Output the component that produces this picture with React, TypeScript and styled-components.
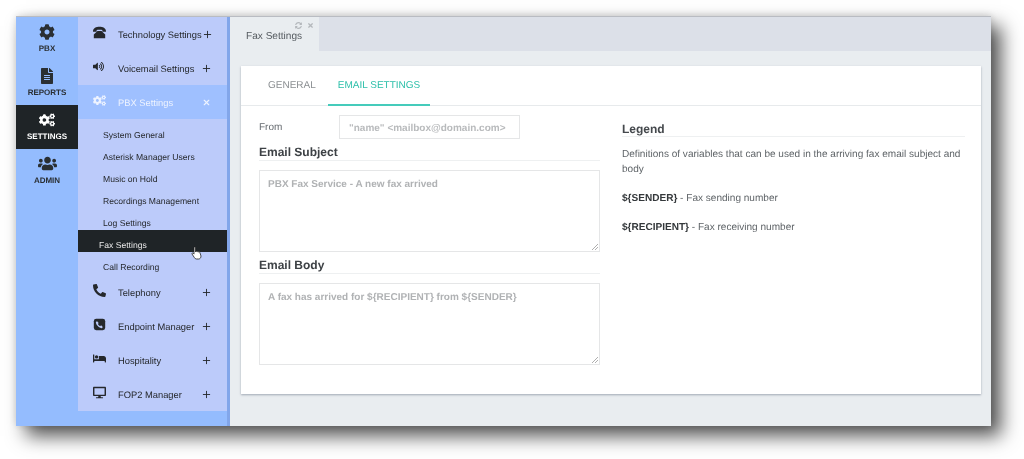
import React from 'react';
import styled, { createGlobalStyle } from 'styled-components';
import { FaCog, FaCogs, FaFileAlt, FaUsers, FaPhone, FaVolumeUp, FaBed, FaDesktop, FaTimes, FaSyncAlt } from 'react-icons/fa';
import { FiPlus, FiX } from 'react-icons/fi';

const GlobalStyle = createGlobalStyle`
    html, body {
        margin: 0;
        padding: 0;
        background: #fff;
        overflow: hidden;
        font-family: "Liberation Sans", Arial, sans-serif;
        text-rendering: geometricPrecision;
    }
`;

const Page = styled.div`
    width: 1024px;
    height: 459px;
    padding: 16px 33px 33px 16px;
    box-sizing: border-box;
`;

const Window = styled.div`
    display: flex;
    height: 410px;
    border-top: 1px solid #b9bcc2;
    box-sizing: border-box;
    box-shadow: 10px 10px 18px rgba(0, 0, 0, 0.68), 0 -1px 8px rgba(0, 0, 0, 0.14);
    filter: blur(0.35px);
`;

const Rail = styled.div`
    width: 62px;
    flex-shrink: 0;
    background: #94bcfe;
`;

const RailItem = styled.div<{ active?: boolean; iconHeight?: number }>`
    height: 44px;
    display: flex;
    flex-direction: column;
    align-items: center;
    padding-top: ${props => props.iconHeight ? 5 : 7}px;
    box-sizing: border-box;
    background: ${props => props.active ? '#1f2427' : 'transparent'};
    color: ${props => props.active ? '#fff' : '#2a2f33'};
    font-size: 8px;
    font-weight: 700;

    svg {
        width: auto;
        height: ${props => props.iconHeight || 16}px;
        margin-bottom: ${props => props.iconHeight ? 3 : 4}px;
    }
`;

const NavColumn = styled.div`
    width: 152px;
    box-sizing: border-box;
    flex-shrink: 0;
    background: #94bcfe;
    border-right: 3px solid #82a6ea;
`;

const NavPanel = styled.div`
    background: #bccbfa;
`;

const NavRow = styled.div<{ active?: boolean }>`
    height: 34px;
    display: flex;
    align-items: center;
    padding-left: 15px;
    background: ${props => props.active ? '#9fc0ff' : 'transparent'};
    color: ${props => props.active ? '#eef3ff' : '#25282c'};
    font-size: 9.35px;
`;

const NavIcon = styled.span<{ size?: number }>`
    width: 25px;
    display: flex;
    align-items: center;
    flex-shrink: 0;
    margin-top: -4px;

    svg {
        width: ${props => props.size || 13}px;
        height: ${props => props.size || 13}px;
    }
`;

const NavLabel = styled.span`
    flex: 1;
    white-space: nowrap;
    padding-top: 1px;
`;

const NavSign = styled.span<{ close?: boolean }>`
    width: 14px;
    margin-right: 14px;
    display: flex;
    justify-content: center;

    svg {
        width: ${props => props.close ? 9 : 11}px;
        height: ${props => props.close ? 9 : 11}px;
        stroke-width: ${props => props.close ? 3 : 2};
    }
`;

const SubList = styled.div`
    padding: 1px 0;
`;

const SubItem = styled.div<{ active?: boolean }>`
    height: 22px;
    box-sizing: border-box;
    padding-top: 9px;
    line-height: 12px;
    padding-left: ${props => props.active ? '21px' : '25px'};
    background: ${props => props.active ? '#1f2427' : 'transparent'};
    color: ${props => props.active ? '#e8e8e8' : '#25282c'};
    font-size: 8.6px;
    position: relative;
`;

const Pointer = styled.svg`
    position: absolute;
    right: 25px;
    top: 16px;
    width: 11px;
    height: 14px;
`;

const MirroredPhone = styled(FaPhone)`
    transform: scaleX(-1);
`;

const Main = styled.div`
    flex: 1;
    display: flex;
    flex-direction: column;
    background: #e9edf0;
`;

const TabBar = styled.div`
    height: 34px;
    flex-shrink: 0;
    background: #dce0e8;
`;

const Tab = styled.div`
    width: 89px;
    height: 34px;
    box-sizing: border-box;
    background: #e9edf0;
    padding: 14px 0 0 16px;
    font-size: 10.1px;
    color: #555b60;
    position: relative;
`;

const TabTools = styled.div`
    position: absolute;
    top: 5px;
    right: 5px;
    display: flex;
    gap: 5px;
    color: #b4b8bc;

    svg {
        width: 7px;
        height: 7px;
    }
`;

const Card = styled.div`
    margin: 15px 10px 0 11px;
    height: 328px;
    background: #fff;
    box-shadow: 0 1px 2px rgba(90, 100, 120, 0.5);
`;

const CardTabs = styled.div`
    height: 40px;
    box-sizing: border-box;
    display: flex;
    border-bottom: 1px solid #e7eaec;
    padding-left: 17px;
`;

const CardTab = styled.div<{ active?: boolean }>`
    height: 40px;
    box-sizing: border-box;
    padding: 14px 10px 0;
    margin-right: 2px;
    font-size: 10px;
    color: ${props => props.active ? '#2bbfa9' : '#8b8f92'};
    border-bottom: ${props => props.active ? '2px solid #45cbbb' : 'none'};
`;

const CardBody = styled.div`
    display: flex;
    padding: 9px 16px 0 18px;
    gap: 22px;
`;

const LeftColumn = styled.div`
    width: 341px;
    flex-shrink: 0;
`;

const RightColumn = styled.div`
    flex: 1;
    padding-top: 7px;
    font-size: 10.05px;
    color: #5f6468;
`;

const FormRow = styled.div`
    display: flex;
    align-items: center;
    height: 24px;
`;

const FormLabel = styled.label`
    width: 80px;
    padding-top: 1px;
    font-size: 10px;
    color: #666b70;
`;

const TextInput = styled.div`
    width: 181px;
    height: 24px;
    box-sizing: border-box;
    border: 1px solid #e5e6e7;
    padding: 1px 9px 0;
    line-height: 23px;
    font-size: 10px;
    font-weight: 700;
    color: #b8babc;
    white-space: nowrap;
`;

const SectionTitle = styled.h3`
    margin: 6px 0 0;
    font-size: 12px;
    font-weight: 700;
    color: #3d4145;
    border-bottom: 1px solid #eef0f1;
    line-height: 15px;
`;

const TextBox = styled.div<{ tall?: boolean }>`
    margin-top: 9px;
    height: ${props => props.tall ? 82 : 81.5}px;
    box-sizing: border-box;
    border: 1px solid #e5e6e7;
    padding: 7px 8px;
    font-size: 10px;
    font-weight: 700;
    line-height: 13px;
    color: #b0b2b4;
    position: relative;
`;

const Grip = styled.svg`
    position: absolute;
    right: 1px;
    bottom: 1px;
    width: 7px;
    height: 7px;
`;

const LegendTitle = styled.h3`
    margin: 0 0 11px;
    font-size: 12px;
    font-weight: 700;
    color: #45494d;
    border-bottom: 1px solid #eef0f1;
    line-height: 14px;
`;

const LegendText = styled.p`
    margin: 0 0 14.5px;
    line-height: 14.5px;

    b {
        color: #34383b;
    }
`;

const DeskPhone = () => (
    <svg viewBox="0 0 16 16" fill="currentColor">
        <path d="M0 7C0 2.500 4 1 8 1s8 1.500 8 6h-4.500V4.800C10 4.400 6 4.400 4.500 4.800V7z" />
        <path d="M5.500 6h5L15 10.500V15H1v-4.500z" />
    </svg>
);

const PhoneSquare = () => (
    <svg viewBox="0 0 16 16">
        <rect x="1" y="1" width="14" height="14" rx="3" fill="currentColor" />
        <path d="M5 4l2 2-1 1.300c.6 1.200 1.500 2.100 2.700 2.700L10 9l2 2-1 1.500C7.500 12.500 3.500 8.500 3.500 5z" fill="#bccbfa" />
    </svg>
);

const topItems = [
    { icon: <DeskPhone />, label: 'Technology Settings' },
    { icon: <FaVolumeUp />, label: 'Voicemail Settings', size: 11 },
];

const subItems = ['System General', 'Asterisk Manager Users', 'Music on Hold', 'Recordings Management', 'Log Settings', 'Fax Settings', 'Call Recording'];

const bottomItems = [
    { icon: <MirroredPhone />, label: 'Telephony' },
    { icon: <PhoneSquare />, label: 'Endpoint Manager' },
    { icon: <FaBed />, label: 'Hospitality' },
    { icon: <FaDesktop />, label: 'FOP2 Manager' },
];

const ResizeGrip = () => (
    <Grip viewBox="0 0 7 7" stroke="#9a9a9a" strokeWidth="0.8">
        <path d="M7 1L1 7M7 4L4 7" />
    </Grip>
);

const App = () => {
    return (
        <Page>
            <GlobalStyle />
            <Window>
                <Rail>
                    <RailItem><FaCog />PBX</RailItem>
                    <RailItem><FaFileAlt />REPORTS</RailItem>
                    <RailItem active><FaCogs />SETTINGS</RailItem>
                    <RailItem iconHeight={19}><FaUsers />ADMIN</RailItem>
                </Rail>
                <NavColumn>
                    <NavPanel>
                        {topItems.map(item => (
                            <NavRow key={item.label}>
                                <NavIcon size={item.size}>{item.icon}</NavIcon>
                                <NavLabel>{item.label}</NavLabel>
                                <NavSign><FiPlus /></NavSign>
                            </NavRow>
                        ))}
                        <NavRow active>
                            <NavIcon><FaCogs /></NavIcon>
                            <NavLabel>PBX Settings</NavLabel>
                            <NavSign close><FiX /></NavSign>
                        </NavRow>
                        <SubList>
                            {subItems.map(name => (
                                <SubItem key={name} active={name === 'Fax Settings'}>
                                    {name}
                                    {name === 'Fax Settings' && (
                                        <Pointer viewBox="0 0 11 14">
                                            <path d="M3 1.200c.6-.6 1.400-.2 1.400.6V6l.6-.6c.5-.3 1-.2 1.300.2.500-.3 1-.2 1.300.3.500-.2 1-.1 1.200.4L10 10c0 1.800-1 3-2.500 3H5.500C4.500 13 4 12.500 3.400 11.600L1 8c-.3-.6.300-1.300 1-.9l1 1z" fill="#fff" stroke="#222" strokeWidth="0.8" />
                                        </Pointer>
                                    )}
                                </SubItem>
                            ))}
                        </SubList>
                        {bottomItems.map(item => (
                            <NavRow key={item.label}>
                                <NavIcon>{item.icon}</NavIcon>
                                <NavLabel>{item.label}</NavLabel>
                                <NavSign><FiPlus /></NavSign>
                            </NavRow>
                        ))}
                    </NavPanel>
                </NavColumn>
                <Main>
                    <TabBar>
                        <Tab>
                            Fax Settings
                            <TabTools><FaSyncAlt /><FaTimes /></TabTools>
                        </Tab>
                    </TabBar>
                    <Card>
                        <CardTabs>
                            <CardTab>GENERAL</CardTab>
                            <CardTab active>EMAIL SETTINGS</CardTab>
                        </CardTabs>
                        <CardBody>
                            <LeftColumn>
                                <FormRow>
                                    <FormLabel>From</FormLabel>
                                    <TextInput>"name" &lt;mailbox@domain.com&gt;</TextInput>
                                </FormRow>
                                <SectionTitle>Email Subject</SectionTitle>
                                <TextBox>PBX Fax Service - A new fax arrived<ResizeGrip /></TextBox>
                                <SectionTitle>Email Body</SectionTitle>
                                <TextBox tall>A fax has arrived for ${'{'}RECIPIENT{'}'} from ${'{'}SENDER{'}'}<ResizeGrip /></TextBox>
                            </LeftColumn>
                            <RightColumn>
                                <LegendTitle>Legend</LegendTitle>
                                <LegendText>Definitions of variables that can be used in the arriving fax email subject and body</LegendText>
                                <LegendText><b>${'{'}SENDER{'}'}</b> - Fax sending number</LegendText>
                                <LegendText><b>${'{'}RECIPIENT{'}'}</b> - Fax receiving number</LegendText>
                            </RightColumn>
                        </CardBody>
                    </Card>
                </Main>
            </Window>
        </Page>
    );
};

export default App;
